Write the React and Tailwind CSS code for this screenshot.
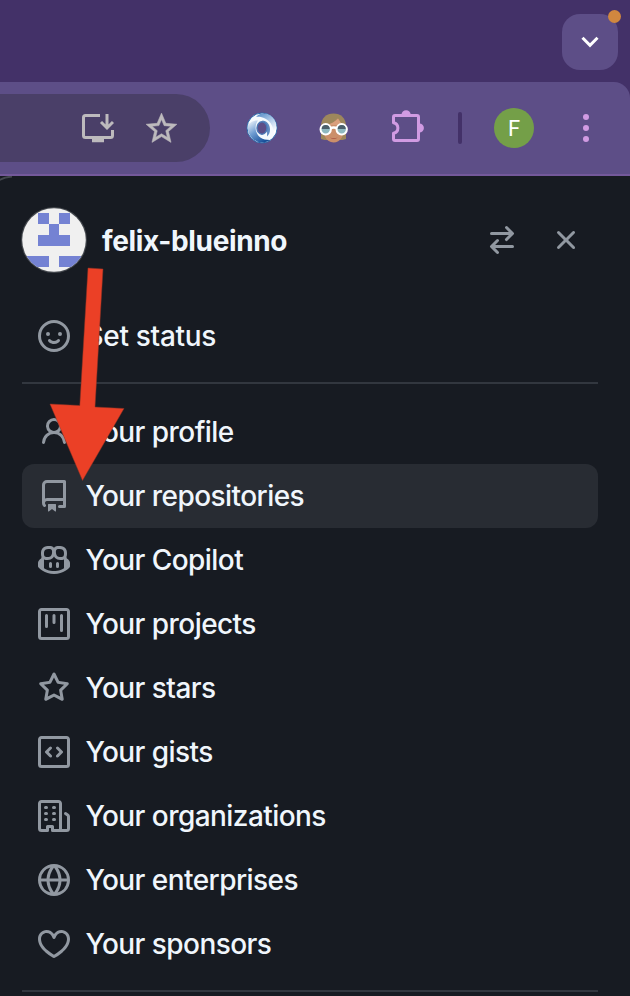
const ICONS = {
  smiley:
    "M8 0a8 8 0 1 1 0 16A8 8 0 0 1 8 0ZM1.5 8a6.5 6.5 0 1 0 13 0 6.5 6.5 0 0 0-13 0Zm3.82 1.636a.75.75 0 0 1 1.038.175l.007.009c.103.118.22.222.35.31.264.178.683.37 1.285.37.602 0 1.02-.192 1.285-.371.13-.088.247-.192.35-.31l.007-.008a.75.75 0 0 1 1.222.87l-.022-.015c.02.013.021.015.021.015v.001l-.001.002-.002.003-.005.007-.014.019a2.066 2.066 0 0 1-.184.213c-.16.166-.338.316-.53.445-.63.418-1.37.638-2.127.629-.946 0-1.652-.308-2.126-.63a3.331 3.331 0 0 1-.715-.657l-.014-.02-.005-.006-.002-.003v-.002h-.001l.613-.432-.614.43a.75.75 0 0 1 .183-1.044ZM12 7a1 1 0 1 1-2 0 1 1 0 0 1 2 0ZM5 8a1 1 0 1 1 0-2 1 1 0 0 1 0 2Z",
  person:
    "M10.561 8.073a6.005 6.005 0 0 1 3.432 5.142.75.75 0 1 1-1.498.07 4.5 4.5 0 0 0-8.99 0 .75.75 0 0 1-1.498-.07 6.004 6.004 0 0 1 3.431-5.142 3.999 3.999 0 1 1 5.123 0ZM10.5 5a2.5 2.5 0 1 0-5 0 2.5 2.5 0 0 0 5 0Z",
  repo: "M2 2.5A2.5 2.5 0 0 1 4.5 0h8.75a.75.75 0 0 1 .75.75v12.5a.75.75 0 0 1-.75.75h-2.5a.75.75 0 0 1 0-1.5h1.75v-2h-8a1 1 0 0 0-.714 1.7.75.75 0 1 1-1.072 1.05A2.495 2.495 0 0 1 2 11.5Zm10.5-1h-8a1 1 0 0 0-1 1v6.708A2.486 2.486 0 0 1 4.5 9h8ZM5 12.25a.25.25 0 0 1 .25-.25h3.5a.25.25 0 0 1 .25.25v3.25a.25.25 0 0 1-.4.2l-1.45-1.087a.249.249 0 0 0-.3 0L5.4 15.7a.25.25 0 0 1-.4-.2Z",
  copilot:
    "M7.998 15.035c-4.562 0-7.873-2.914-7.998-3.749V9.338c.085-.628.677-1.686 1.588-2.065.013-.07.024-.143.036-.218.029-.183.06-.384.126-.612-.201-.508-.254-1.084-.254-1.656 0-.87.128-1.769.693-2.484.579-.733 1.494-1.124 2.724-1.261 1.206-.134 2.262.034 2.944.765.05.053.096.108.139.165.044-.057.094-.112.143-.165.682-.731 1.738-.899 2.944-.765 1.23.137 2.145.528 2.724 1.261.566.715.693 1.614.693 2.484 0 .572-.053 1.148-.254 1.656.066.228.098.429.126.612.012.076.024.148.037.218.924.385 1.522 1.471 1.591 2.095v1.872c0 .766-3.351 3.795-8.002 3.795Zm0-1.485c2.28 0 4.584-1.11 5.002-1.433V7.862l-.023-.116c-.49.21-1.075.291-1.727.291-1.146 0-2.059-.327-2.71-.991A3.222 3.222 0 0 1 8 6.303a3.24 3.24 0 0 1-.544.743c-.65.664-1.563.991-2.71.991-.652 0-1.236-.081-1.727-.291l-.023.116v4.255c.419.323 2.722 1.433 5.002 1.433ZM6.762 2.83c-.193-.206-.637-.413-1.682-.297-1.019.113-1.479.404-1.713.7-.247.312-.369.789-.369 1.554 0 .793.129 1.171.308 1.371.162.181.519.379 1.442.379.853 0 1.339-.235 1.638-.54.315-.322.527-.827.617-1.553.117-.935-.037-1.395-.241-1.614Zm4.155-.297c-1.044-.116-1.488.091-1.681.297-.204.219-.359.679-.242 1.614.091.726.303 1.231.618 1.553.299.305.784.54 1.638.54.922 0 1.28-.198 1.442-.379.179-.2.308-.578.308-1.371 0-.765-.123-1.242-.37-1.554-.233-.296-.693-.587-1.713-.7ZM6.25 9.037a.75.75 0 0 1 .75.75v1.501a.75.75 0 0 1-1.5 0V9.787a.75.75 0 0 1 .75-.75Zm4.25.75v1.501a.75.75 0 0 1-1.5 0V9.787a.75.75 0 0 1 1.5 0Z",
  project:
    "M1.75 0h12.5C15.216 0 16 .784 16 1.75v12.5A1.75 1.75 0 0 1 14.25 16H1.75A1.75 1.75 0 0 1 0 14.25V1.75C0 .784.784 0 1.75 0ZM1.5 1.75v12.5c0 .138.112.25.25.25h12.5a.25.25 0 0 0 .25-.25V1.75a.25.25 0 0 0-.25-.25H1.75a.25.25 0 0 0-.25.25ZM11.75 3a.75.75 0 0 1 .75.75v7.5a.75.75 0 0 1-1.5 0v-7.5a.75.75 0 0 1 .75-.75Zm-8.25.75a.75.75 0 0 1 1.5 0v5.5a.75.75 0 0 1-1.5 0ZM8 3a.75.75 0 0 1 .75.75v3.5a.75.75 0 0 1-1.5 0v-3.5A.75.75 0 0 1 8 3Z",
  star: "M8 .25a.75.75 0 0 1 .673.418l1.882 3.815 4.21.612a.75.75 0 0 1 .416 1.279l-3.046 2.97.719 4.192a.751.751 0 0 1-1.088.791L8 12.347l-3.766 1.98a.75.75 0 0 1-1.088-.79l.72-4.194L.818 6.374a.75.75 0 0 1 .416-1.28l4.21-.611L7.327.668A.75.75 0 0 1 8 .25Zm0 2.445L6.615 5.5a.75.75 0 0 1-.564.41l-3.097.45 2.24 2.184a.75.75 0 0 1 .216.664l-.528 3.084 2.769-1.456a.75.75 0 0 1 .698 0l2.77 1.456-.53-3.084a.75.75 0 0 1 .216-.664l2.24-2.183-3.096-.45a.75.75 0 0 1-.564-.41L8 2.694Z",
  gist: "M0 1.75C0 .784.784 0 1.75 0h12.5C15.216 0 16 .784 16 1.75v12.5A1.75 1.75 0 0 1 14.25 16H1.75A1.75 1.75 0 0 1 0 14.25Zm1.75-.25a.25.25 0 0 0-.25.25v12.5c0 .138.112.25.25.25h12.5a.25.25 0 0 0 .25-.25V1.75a.25.25 0 0 0-.25-.25Zm7.47 3.97a.75.75 0 0 1 1.06 0l2 2a.75.75 0 0 1 0 1.06l-2 2a.749.749 0 0 1-1.275-.326.749.749 0 0 1 .215-.734L10.69 8 9.22 6.53a.75.75 0 0 1 0-1.06ZM6.78 6.53 5.31 8l1.47 1.47a.749.749 0 0 1-.326 1.275.749.749 0 0 1-.734-.215l-2-2a.75.75 0 0 1 0-1.06l2-2a.751.751 0 0 1 1.042.018.751.751 0 0 1 .018 1.042Z",
  organization:
    "M1.75 16A1.75 1.75 0 0 1 0 14.25V1.75C0 .784.784 0 1.75 0h8.5C11.216 0 12 .784 12 1.75v12.5c0 .085-.006.168-.018.25h2.268a.25.25 0 0 0 .25-.25V8.285a.25.25 0 0 0-.111-.208l-1.055-.703a.749.749 0 1 1 .832-1.248l1.055.703c.487.325.779.871.779 1.456v5.965A1.75 1.75 0 0 1 14.25 16h-3.5a.766.766 0 0 1-.197-.026c-.099.017-.2.026-.303.026h-3a.75.75 0 0 1-.75-.75V14h-1v1.25a.75.75 0 0 1-.75.75Zm-.25-1.75c0 .138.112.25.25.25H4v-1.25a.75.75 0 0 1 .75-.75h2.5a.75.75 0 0 1 .75.75v1.25h2.25a.25.25 0 0 0 .25-.25V1.75a.25.25 0 0 0-.25-.25h-8.5a.25.25 0 0 0-.25.25ZM3.75 6h.5a.75.75 0 0 1 0 1.5h-.5a.75.75 0 0 1 0-1.5ZM3 3.75A.75.75 0 0 1 3.75 3h.5a.75.75 0 0 1 0 1.5h-.5A.75.75 0 0 1 3 3.75Zm4 3A.75.75 0 0 1 7.75 6h.5a.75.75 0 0 1 0 1.5h-.5A.75.75 0 0 1 7 6.75ZM7.75 3h.5a.75.75 0 0 1 0 1.5h-.5a.75.75 0 0 1 0-1.5ZM3 9.75A.75.75 0 0 1 3.75 9h.5a.75.75 0 0 1 0 1.5h-.5A.75.75 0 0 1 3 9.75ZM7.75 9h.5a.75.75 0 0 1 0 1.5h-.5a.75.75 0 0 1 0-1.5Z",
  globe:
    "M8 0a8 8 0 1 1 0 16A8 8 0 0 1 8 0ZM5.78 8.75a9.64 9.64 0 0 0 1.363 4.177c.255.426.542.832.857 1.215.245-.296.551-.705.857-1.215A9.64 9.64 0 0 0 10.22 8.75Zm4.44-1.5a9.64 9.64 0 0 0-1.363-4.177c-.307-.51-.612-.919-.857-1.215a9.927 9.927 0 0 0-.857 1.215A9.64 9.64 0 0 0 5.78 7.25Zm-5.944 1.5H1.543a6.507 6.507 0 0 0 4.666 5.5c-.123-.181-.24-.365-.352-.552-.715-1.192-1.437-2.874-1.581-4.948Zm-2.733-1.5h2.733c.144-2.074.866-3.756 1.58-4.948.12-.197.237-.381.353-.552a6.507 6.507 0 0 0-4.666 5.5Zm10.181 1.5c-.144 2.074-.866 3.756-1.58 4.948-.12.197-.237.381-.353.552a6.507 6.507 0 0 0 4.666-5.5Zm2.733-1.5a6.507 6.507 0 0 0-4.666-5.5c.123.181.24.365.353.552.714 1.192 1.436 2.874 1.58 4.948Z",
  heart:
    "m8 14.25.345.666a.75.75 0 0 1-.69 0l-.008-.004-.018-.01a7.152 7.152 0 0 1-.31-.17 22.055 22.055 0 0 1-3.434-2.414C2.045 10.731 0 8.35 0 5.5 0 2.836 2.086 1 4.25 1 5.797 1 7.153 1.802 8 3.02 8.847 1.802 10.203 1 11.75 1 13.914 1 16 2.836 16 5.5c0 2.85-2.045 5.231-3.885 6.818a22.066 22.066 0 0 1-3.744 2.584l-.018.01-.006.003h-.002ZM4.25 2.5c-1.336 0-2.75 1.164-2.75 3 0 2.15 1.58 4.144 3.365 5.682A20.58 20.58 0 0 0 8 13.393a20.58 20.58 0 0 0 3.135-2.211C12.92 9.644 14.5 7.65 14.5 5.5c0-1.836-1.414-3-2.75-3-1.373 0-2.609.986-3.029 2.456a.749.749 0 0 1-1.442 0C6.859 3.486 5.623 2.5 4.25 2.5Z",
  switchArrows:
    "M5.22 14.78a.75.75 0 0 0 1.06-1.06L4.56 12h8.69a.75.75 0 0 0 0-1.5H4.56l1.72-1.72a.75.75 0 0 0-1.06-1.06l-3 3a.75.75 0 0 0 0 1.06l3 3Zm5.56-6.5a.75.75 0 1 1-1.06-1.06l1.72-1.72H2.75a.75.75 0 0 1 0-1.5h8.69L9.72 2.28a.75.75 0 0 1 1.06-1.06l3 3a.75.75 0 0 1 0 1.06l-3 3Z",
  close:
    "M3.72 3.72a.75.75 0 0 1 1.06 0L8 6.94l3.22-3.22a.749.749 0 0 1 1.275.326.749.749 0 0 1-.215.734L9.06 8l3.22 3.22a.749.749 0 0 1-.326 1.275.749.749 0 0 1-.734-.215L8 9.06l-3.22 3.22a.751.751 0 0 1-1.042-.018.751.751 0 0 1-.018-1.042L6.94 8 3.72 4.78a.75.75 0 0 1 0-1.06Z",
};

const MENU = [
  ["person", "Your profile"],
  ["repo", "Your repositories"],
  ["copilot", "Your Copilot"],
  ["project", "Your projects"],
  ["star", "Your stars"],
  ["gist", "Your gists"],
  ["organization", "Your organizations"],
  ["globe", "Your enterprises"],
  ["heart", "Your sponsors"],
];

function Icon({ name }) {
  return (
    <svg viewBox="0 0 16 16" className="size-8 shrink-0 fill-[#9198a1]">
      <path fillRule="evenodd" d={ICONS[name]} />
    </svg>
  );
}

function MenuItem({ icon, label, active }) {
  return (
    <li
      className={
        active
          ? "flex h-16 items-center gap-4 rounded-xl bg-[#282c33] px-4"
          : "flex h-16 items-center gap-4 rounded-xl px-4"
      }
    >
      <Icon name={icon} />
      <span
        className={
          icon === "smiley"
            ? "-ml-[0.5px] whitespace-nowrap text-[28px] font-medium leading-10 tracking-[-0.3px]"
            : "-ml-[0.5px] whitespace-nowrap text-[28px] font-medium leading-10 tracking-[-0.56px]"
        }
      >
        {label}
      </span>
    </li>
  );
}

function TabStrip() {
  return (
    <div className="flex h-[82px] justify-end bg-[#433168] pt-3.5 pr-3">
      <div className="relative flex size-14 items-center justify-center rounded-[18px] bg-[#5d4e87]">
        <svg viewBox="0 0 24 16" className="h-4 w-6" fill="none" stroke="#fff" strokeWidth="3">
          <path d="M4.500 3.800 12 11.300l7.500-7.500" />
        </svg>
        <span className="absolute -top-[4.500px] -right-[2.500px] size-[13px] rounded-full bg-[#d0873f]" />
      </div>
    </div>
  );
}

function InstallIcon() {
  return (
    <svg viewBox="0 0 34 32" className="h-8 w-[34px]" fill="none" stroke="#bdbabd" strokeWidth="3">
      <path d="M20 3.500H5.500Q3.500 3.500 3.500 5.500V23.500Q3.500 25.500 5.500 25.500H30.500Q32.500 25.500 32.500 23.500V18" />
      <path d="M12 28h12" strokeWidth="4.500" />
      <path d="M27 2v14M21 10 27 16l6-6" />
    </svg>
  );
}

function SwirlIcon() {
  return (
    <svg viewBox="0 0 32 32" className="size-8">
      <defs>
        <linearGradient id="swirlRight" x1="0" y1="0" x2="0.6" y2="1">
          <stop offset="0" stopColor="#4f86c4" />
          <stop offset="0.5" stopColor="#a9c6e6" />
          <stop offset="1" stopColor="#ffffff" />
        </linearGradient>
        <linearGradient id="swirlLeft" x1="0" y1="0" x2="0.7" y2="1">
          <stop offset="0" stopColor="#ffffff" />
          <stop offset="0.5" stopColor="#6f9dd2" />
          <stop offset="1" stopColor="#164e98" />
        </linearGradient>
      </defs>
      <circle cx="16" cy="16" r="15" fill="#f6fafd" stroke="#2869aa" />
      {/* outer shading along the rim */}
      <path d="M17 1.500c8 0 13.500 6 13.500 14 0 3-1 6-2.500 8 0-8-3-14-9-17-3-1.500-6-2-9-1.500 2-2 4-3.500 7-3.500Z" fill="url(#swirlRight)" />
      <path d="M1.700 13C1 22 7 30.500 16 30.500c3 0 6-1 8-2.500-8 0-12-3-14-9-1-4 0-8 2-10.500C8 8 5 9.500 1.700 13Z" fill="url(#swirlLeft)" />
      {/* inner shading around the opening */}
      <path d="M16 8.500c5 0 8 4 8 9 0 3-1 5-3 7 0-4 1-12-5-16Z" fill="#2d66ad" opacity=".75" />
      <ellipse cx="16" cy="16" rx="5" ry="6.200" fill="#5d4e87" stroke="#4a77b5" strokeWidth="1.400" />
    </svg>
  );
}

function GogglesIcon() {
  return (
    <svg viewBox="0 0 32 32" className="size-8">
      <path d="M3 27V14C3 6 8.500 1.500 15.500 1.500S28 6 28 14v13l-3.500 1h-18Z" fill="#9d875c" />
      <path d="M5 14c6-1 11-3.500 15-7.500 2 4 3.500 6 6 7 1 10-3.500 17-10.500 17S4 22 5 14Z" fill="#cb8f6a" />
      <path d="M8 13c5-1 9-3 12-6.500 2 3 3 5 5 6.500Z" fill="#d99f7c" />
      <path d="M11.800 25.500q4 1.200 8 0-4 3-8 0Z" fill="#b0604a" />
      <path d="M12 16.500q3.700-2 7.400 0" fill="none" stroke="#fff" strokeWidth="2.400" />
      <circle cx="7.700" cy="17.300" r="5.200" fill="#8fb9c0" stroke="#fff" strokeWidth="2" />
      <circle cx="23.700" cy="17.300" r="5.200" fill="#8fb9c0" stroke="#fff" strokeWidth="2" />
      <path d="M3.700 17a4 4 0 0 1 8 0ZM19.700 17a4 4 0 0 1 8 0Z" fill="#4c5f6b" />
    </svg>
  );
}

function PuzzleIcon() {
  return (
    <svg viewBox="0 1 34 34" className="size-[34px] overflow-visible">
      <path
        d="M5 5.500H27q1.500 0 1.500 1.500V29q0 1.500-1.500 1.500H5q-1.500 0-1.500-1.500V23.300a5.400 5.400 0 0 0 0-10.600V7q0-1.500 1.500-1.500Z"
        fill="none"
        stroke="#d19be3"
        strokeWidth="3"
        strokeLinejoin="round"
      />
      <path d="M11.500 4.800a4.600 4.600 0 0 1 9.200 0ZM29.300 13.400a4.600 4.600 0 0 1 0 9.200Z" fill="#d19be3" />
    </svg>
  );
}

function Toolbar() {
  return (
    <div className="bg-[#433168]">
      <div className="flex h-[94px] items-center rounded-tr-[16px] border-b-2 border-[#74599b] bg-[#5d4e87]">
        <div className="flex h-[68px] w-[210px] items-center rounded-r-full bg-[#4a3f68] pl-[80px]">
          <InstallIcon />
          <svg
            viewBox="0 0 24 24"
            className="ml-[29px] size-[37px]"
            fill="#bdbabd"
            stroke="#bdbabd"
            strokeWidth=".35"
          >
            <path d="M22 9.240l-7.190-.620L12 2 9.190 8.630 2 9.240l5.460 4.730L5.820 21 12 17.270 18.180 21l-1.630-7.030L22 9.240zM12 15.400l-3.760 2.270 1-4.280-3.320-2.880 4.380-.380L12 6.100l1.710 4.040 4.380.380-3.320 2.880 1 4.280L12 15.400z" />
          </svg>
        </div>
        <div className="ml-9 flex items-center">
          <SwirlIcon />
          <div className="ml-10">
            <GogglesIcon />
          </div>
          <div className="ml-10">
            <PuzzleIcon />
          </div>
          <span className="ml-[34px] h-8 w-1 rounded-full bg-[#433168]" />
          <span className="ml-8 flex size-10 items-center justify-center rounded-full bg-[#749f48] pt-0.5 font-[Roboto] text-[22px] leading-none text-white">
            F
          </span>
          <span className="ml-[49px] flex flex-col gap-[5px]">
            <i className="size-1.5 rounded-full bg-[#d19be3]" />
            <i className="size-1.5 rounded-full bg-[#d19be3]" />
            <i className="size-1.5 rounded-full bg-[#d19be3]" />
          </span>
        </div>
      </div>
    </div>
  );
}

function Avatar() {
  return (
    <svg viewBox="0 0 66 66" className="size-[66px] shrink-0">
      <defs>
        <clipPath id="avatarClip">
          <circle cx="33" cy="33" r="31.800" />
        </clipPath>
      </defs>
      <circle cx="33" cy="33" r="33" fill="#43474d" />
      <g clipPath="url(#avatarClip)">
        <rect width="66" height="66" fill="#f0f0f0" />
        <path
          fill="#7482d3"
          d="M17 6h11v11h10V6h11v11H38v11h11v11H17V28h11V17H17ZM6 49h22v11H6ZM38 49h22v11H38Z"
        />
      </g>
    </svg>
  );
}

export default function App() {
  return (
    <div className="relative h-[996px] w-[630px] overflow-hidden bg-[#171b22] font-[Inter,sans-serif] text-[#f0f6fc]">
      <TabStrip />
      <Toolbar />
      <main className="pr-8 pl-[22px] pt-[31px]">
        <header className="-ml-px flex h-[66px] items-center">
          <Avatar />
          <h1 className="ml-[15px] pt-0.5 text-[28px] font-[650] leading-10 tracking-[-0.35px]">
            felix-blueinno
          </h1>
          <div className="mr-4 ml-auto flex gap-8">
            <Icon name="switchArrows" />
            <Icon name="close" />
          </div>
        </header>
        <ul className="mt-[31px]">
          <MenuItem icon="smiley" label="Set status" />
        </ul>
        <hr className="mt-3.5 border-t-2 border-[#32373f]" />
        <ul className="mt-4">
          {MENU.map(([icon, label]) => (
            <MenuItem key={label} icon={icon} label={label} active={icon === "repo"} />
          ))}
        </ul>
        <hr className="mt-3.5 border-t-2 border-[#32373f]" />
      </main>
      {/* rounded edge of the side panel */}
      <svg className="absolute top-[176px] left-0 h-2 w-4" viewBox="0 0 16 8" fill="none">
        <path d="M-2 5Q4 1 12 .5" stroke="#43484e" strokeWidth="1.800" />
      </svg>
      {/* pointer annotation */}
      <svg className="absolute top-[264px] left-[46px] h-[220px] w-[82px]" viewBox="46 264 82 220">
        <path
          d="M88 268 103 269 95 407 124 408.500 82.500 480.500 50 404 79.800 405.500Z"
          fill="#eb4026"
          stroke="#8f3325"
          strokeWidth=".5"
        />
      </svg>
    </div>
  );
}
